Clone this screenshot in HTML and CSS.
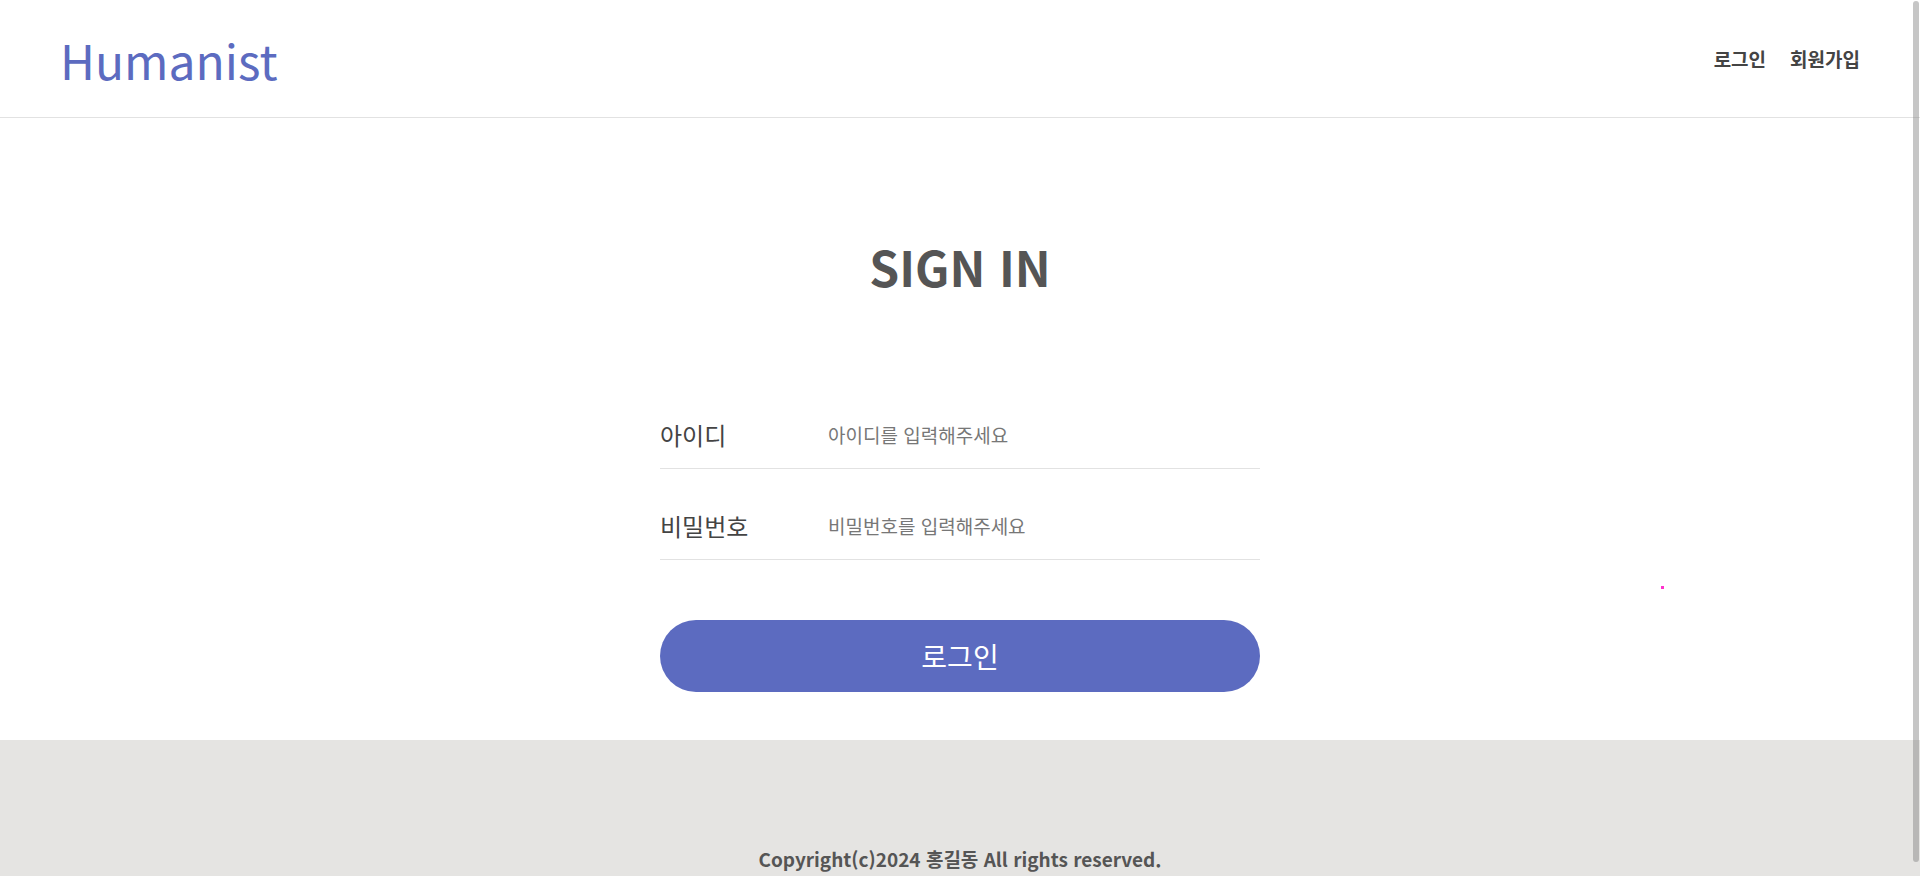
FILE: index.html
```html
<!DOCTYPE html>
<html lang="ko">
<head>
<meta charset="utf-8">
<title>Humanist - Sign In</title>
<link rel="stylesheet" href="styles.css">
</head>
<body>
<header class="site-header">
  <a class="logo" href="#">Humanist</a>
  <nav class="top-nav">
    <a href="#">로그인</a>
    <a href="#">회원가입</a>
  </nav>
</header>
<main class="main">
  <h1 class="title">SIGN IN</h1>
  <form class="login-form">
    <div class="field">
      <label class="field-label" for="uid">아이디</label>
      <input class="field-input" id="uid" type="text" placeholder="아이디를 입력해주세요">
    </div>
    <div class="field">
      <label class="field-label" for="upw">비밀번호</label>
      <input class="field-input" id="upw" type="password" placeholder="비밀번호를 입력해주세요">
    </div>
    <button class="submit" type="button">로그인</button>
  </form>
</main>
<footer class="site-footer">
  <p class="copyright">Copyright(c)2024 홍길동 All rights reserved.</p>
</footer>
<div class="cursor-dot"></div>
<div class="fake-scrollbar"></div>
</body>
</html>
```
FILE: styles.css
```css
html {
  scrollbar-width: none;
}
html::-webkit-scrollbar {
  display: none;
}
* {
  box-sizing: border-box;
}
body {
  margin: 0;
  font-family: "Noto Sans CJK KR", "Noto Sans", sans-serif;
  color: #444;
  background: #fff;
}
a {
  text-decoration: none;
  color: inherit;
}
.site-header {
  height: 118px;
  padding: 0 60px;
  display: flex;
  align-items: center;
  justify-content: space-between;
  border-bottom: 1px solid #e2e2e2;
}
.logo {
  font-size: 48px;
  font-weight: 400;
  color: #5c6bc0;
  line-height: 1;
  margin-top: 0;
}
.top-nav {
  display: flex;
  gap: 24px;
}
.top-nav a {
  font-size: 19px;
  font-weight: 700;
  color: #444;
}
.main {
  padding-top: 119px;
}
.title {
  margin: 0;
  text-align: center;
  font-size: 48px;
  line-height: 58px;
  font-weight: 700;
  color: #555;
}
.login-form {
  width: 600px;
  margin: 109px auto 0;
}
.field {
  height: 65px;
  padding-bottom: 3px;
  display: flex;
  align-items: center;
  border-bottom: 1px solid #e2e2e2;
  margin-bottom: 26px;
}
.field-label {
  width: 168px;
  flex: none;
  font-size: 24px;
  color: #444;
}
.field-input {
  flex: 1;
  border: none;
  outline: none;
  padding: 0;
  font-family: inherit;
  font-size: 19px;
  color: #444;
  background: transparent;
}
.field-input::placeholder {
  color: #777;
}
.submit {
  display: block;
  width: 100%;
  height: 72px;
  margin-top: 60px;
  border: none;
  border-radius: 36px;
  background: #5c6bc0;
  color: #fff;
  font-family: inherit;
  font-size: 28px;
  font-weight: 400;
  cursor: pointer;
}
.site-footer {
  margin-top: 48px;
  height: 160px;
  background: #e5e4e2;
  padding-top: 105px;
}
.copyright {
  margin: 0;
  text-align: center;
  font-size: 19px;
  font-weight: 700;
  color: #555;
}
.cursor-dot {
  position: absolute;
  left: 1661px;
  top: 586px;
  width: 3px;
  height: 3px;
  background: #ff33cc;
}
.fake-scrollbar {
  position: fixed;
  right: 1px;
  top: 1px;
  width: 6px;
  height: 861px;
  border-radius: 3px;
  background: rgba(128, 128, 128, 0.45);
}
```
